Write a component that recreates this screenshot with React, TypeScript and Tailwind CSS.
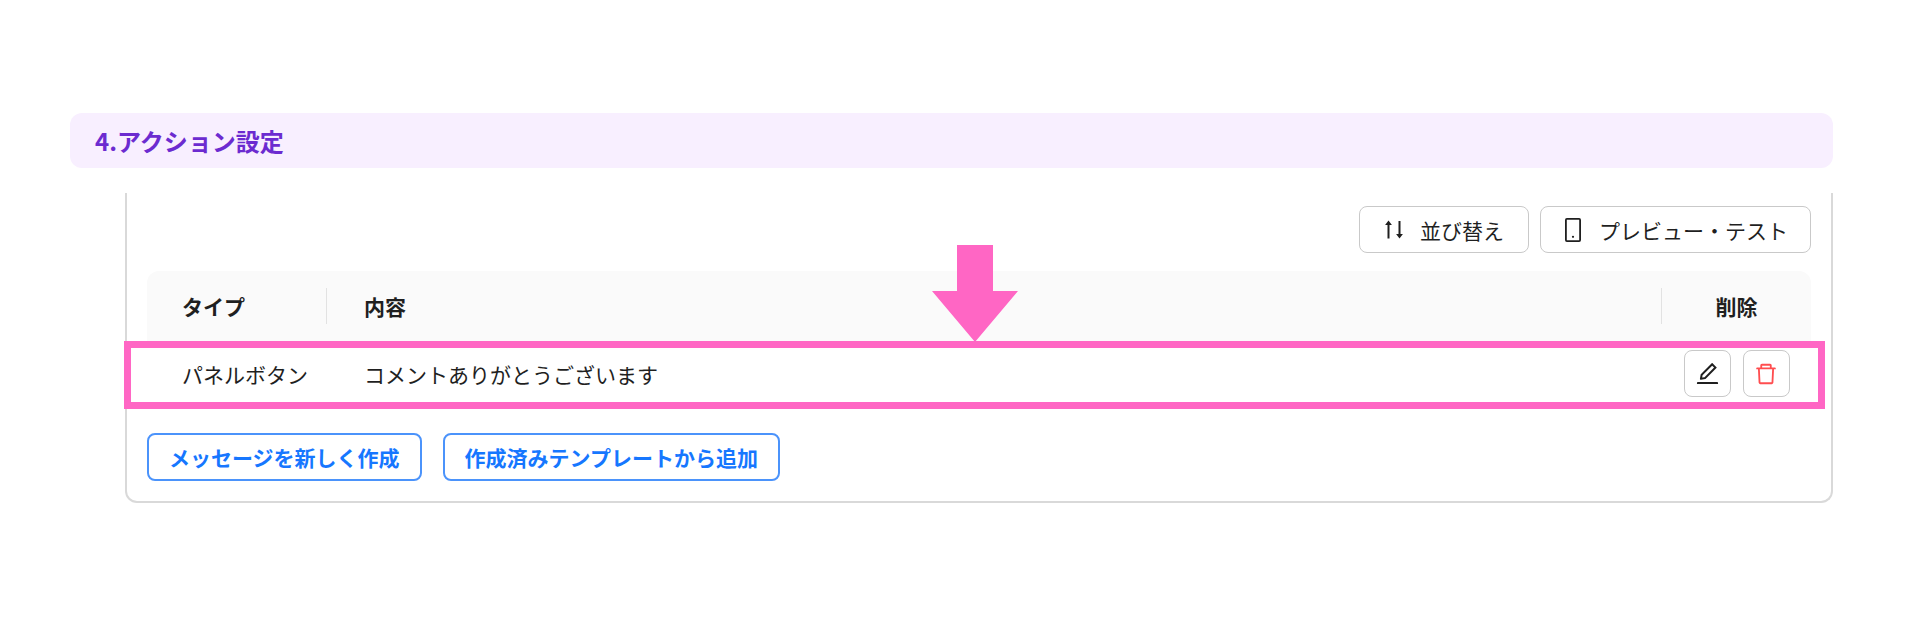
import type { ButtonHTMLAttributes } from "react";
import { AiOutlineDelete, AiOutlineEdit } from "react-icons/ai";

const actions = [{ type: "パネルボタン", content: "コメントありがとうございます" }];

function SortIcon() {
  return (
    <svg width="20" height="20" viewBox="0 0 20 20" fill="none" stroke="currentColor" strokeWidth="2" aria-hidden="true">
      <path d="M4.5 18.5V3M15.5 1v15" />
      <path d="M4.5 0.5l3.4 4.5H1.1zM15.5 18.5l3.4-4.5h-6.8z" fill="currentColor" stroke="none" />
    </svg>
  );
}

function TabletIcon() {
  return (
    <svg width="16" height="24" viewBox="0 0 16 24" fill="none" stroke="currentColor" strokeWidth="1.8" aria-hidden="true">
      <rect x="0.9" y="0.9" width="14.2" height="22.2" rx="1" />
      <circle cx="8" cy="18.8" r="1.1" fill="currentColor" stroke="none" />
    </svg>
  );
}

function OutlineButton({ className = "", ...props }: ButtonHTMLAttributes<HTMLButtonElement>) {
  return (
    <button
      type="button"
      className={`flex h-[47px] items-center justify-center rounded-lg border border-[#c9c9c9] bg-white ${className}`}
      {...props}
    />
  );
}

function PrimaryButton({ children }: { children: string }) {
  return (
    <button
      type="button"
      className="h-12 rounded-lg border-2 border-[#4b93fb] bg-white px-5 font-bold text-[#1677ff]"
    >
      {children}
    </button>
  );
}

export default function App() {
  return (
    <main className="min-h-screen bg-white pt-[113px] pr-[87px] pb-16 pl-[70px] font-['Noto_Sans_CJK_JP',sans-serif] text-[21px] leading-8 text-[#1f1f1f]">
      <h2 className="rounded-xl bg-[#f8efff] px-[25px] py-3 text-2xl leading-[31px] font-bold text-[#6c2bd0]">
        4.アクション設定
      </h2>

      <section className="mt-[25px] ml-[55px] rounded-b-xl border-2 border-t-0 border-[#d9d9d9] px-5 pt-[13px] pb-5">
        <div className="flex justify-end gap-[11px]">
          <OutlineButton className="gap-4 px-6">
            <SortIcon />
            並び替え
          </OutlineButton>
          <OutlineButton className="gap-[18px] pr-[22px] pl-6">
            <TabletIcon />
            プレビュー・テスト
          </OutlineButton>
        </div>

        <div className="relative mt-[18px]">
          <table className="w-full table-fixed text-left">
            <thead>
              <tr className="h-[70px] bg-[#fafafa]">
                <th className="w-[180px] rounded-tl-xl pl-[35px] font-bold">
                  <div className="flex items-center justify-between">
                    タイプ
                    <span className="h-9 w-px bg-[#e2e2e2]" />
                  </div>
                </th>
                <th className="pl-[37px] font-bold">
                  <div className="flex items-center justify-between">
                    内容
                    <span className="h-9 w-px bg-[#e2e2e2]" />
                  </div>
                </th>
                <th className="w-[149px] rounded-tr-xl text-center font-bold">削除</th>
              </tr>
            </thead>
            <tbody>
              {actions.map(({ type, content }) => (
                <tr key={type} className="h-[65px]">
                  <td className="pl-[35px]">{type}</td>
                  <td className="pl-[37px]">{content}</td>
                  <td>
                    <div className="flex justify-center gap-3">
                      <OutlineButton className="w-[47px]" aria-label="編集">
                        <AiOutlineEdit size={27} />
                      </OutlineButton>
                      <OutlineButton className="w-[47px] text-[#ff4d4f]" aria-label="削除">
                        <AiOutlineDelete size={26} />
                      </OutlineButton>
                    </div>
                  </td>
                </tr>
              ))}
            </tbody>
          </table>

          {/* callout over the first row */}
          <div className="pointer-events-none absolute top-[70px] -right-[14px] -left-[23px] h-[68px] border-[7px] border-[#ff66c4]">
            <svg
              className="absolute bottom-full left-1/2 mb-1.5 -translate-x-1/2"
              width="86"
              height="97"
              viewBox="0 0 86 97"
              fill="#ff66c4"
              aria-hidden="true"
            >
              <path d="M25 0h36v46h25L43 97 0 46h25z" />
            </svg>
          </div>
        </div>

        <div className="mt-[27px] flex gap-[21px]">
          <PrimaryButton>メッセージを新しく作成</PrimaryButton>
          <PrimaryButton>作成済みテンプレートから追加</PrimaryButton>
        </div>
      </section>
    </main>
  );
}
